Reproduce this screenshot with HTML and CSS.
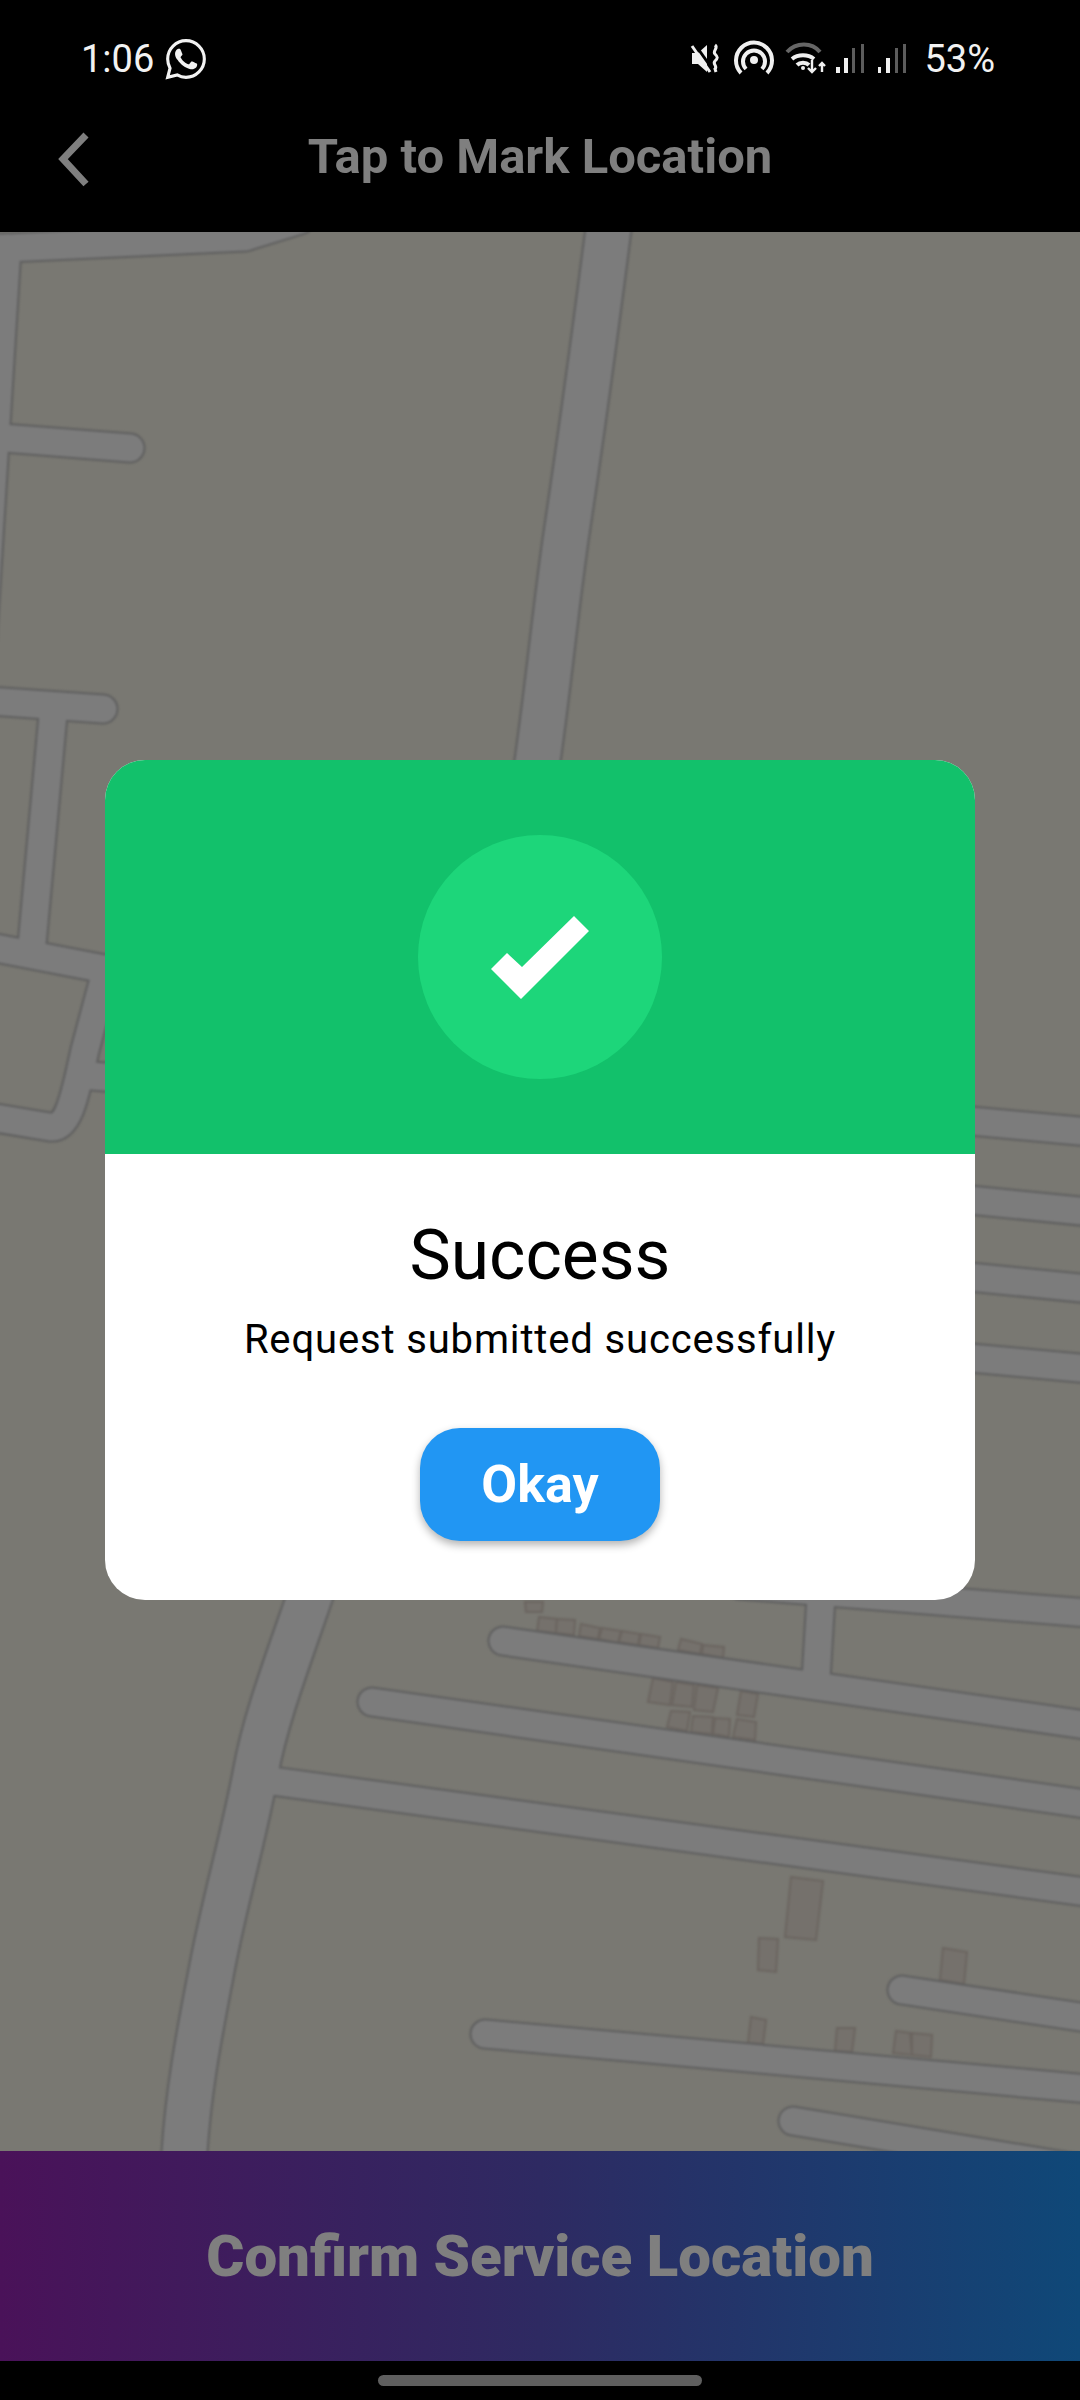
FILE: index.html
```html
<!DOCTYPE html>
<html lang="en">
<head>
    <meta charset="UTF-8">
    <meta name="viewport" content="width=device-width, initial-scale=1.0">
    <title>Tap to Mark Location</title>
    <link rel="stylesheet" href="styles.css">
</head>
<body>

<div class="screen">
    <div class="status-bar">
        <div class="status-left">
            <span class="status-text">1:06</span>
            <svg class="icon-whatsapp" viewBox="0 0 24 24">
                <path class="wa-ring" d="M12 2C6.5 2 2 6.5 2 12c0 1.8.5 3.5 1.3 5L2 22l5.2-1.3C8.6 21.5 10.3 22 12 22c5.5 0 10-4.5 10-10S17.5 2 12 2z"/>
                <path class="wa-phone" d="M17.472 14.382c-.297-.149-1.758-.867-2.03-.967-.273-.099-.471-.148-.67.15-.197.297-.767.966-.94 1.164-.173.199-.347.223-.644.075-.297-.15-1.255-.463-2.39-1.475-.883-.788-1.48-1.761-1.653-2.059-.173-.297-.018-.458.13-.606.134-.133.298-.347.446-.52.149-.174.198-.298.298-.497.099-.198.05-.371-.025-.52-.075-.149-.669-1.612-.916-2.207-.242-.579-.487-.5-.669-.51-.173-.008-.371-.01-.57-.01-.198 0-.52.074-.792.372-.272.297-1.04 1.016-1.04 2.479 0 1.462 1.065 2.875 1.213 3.074.149.198 2.096 3.2 5.077 4.487.709.306 1.262.489 1.694.625.712.227 1.36.195 1.871.118.571-.085 1.758-.719 2.006-1.413.248-.694.248-1.289.173-1.413-.074-.124-.272-.198-.57-.347z"/>
            </svg>
        </div>
        <div class="status-right">
            <!-- mute -->
            <svg class="status-icon" width="36" height="38" viewBox="690 40 36 38">
                <path class="solid" d="M693 53h6l9-8v27l-9-8h-6z"/>
                <path class="cut" d="M695 43l19 27"/>
                <path class="line-thin" d="M693 46l18 26"/>
                <path class="line-thin" d="M716 45c4 3-3 6 0 9s3 4 0 7 3 5 0 8l1 3"/>
            </svg>
            <!-- hotspot -->
            <svg class="status-icon" width="42" height="38" viewBox="734 40 42 38">
                <circle class="solid" cx="755" cy="60" r="4"/>
                <path class="line" d="M747 69a11 11 0 1 1 16 0"/>
                <path class="line" d="M742 73a18 18 0 1 1 26 0"/>
            </svg>
            <!-- wifi -->
            <svg class="status-icon" width="43" height="38" viewBox="784 40 43 38">
                <path class="line dim" d="M788 52c9-10 25-10 33 0"/>
                <path class="line" d="M793 59c6-5 16-5 22 0"/>
                <path class="line" d="M798 65c3-3 9-3 12 0"/>
                <circle class="solid" cx="804" cy="68" r="2"/>
                <path class="thin" d="M813 60v12m-4-4l4 4 4-4"/>
                <path class="thin" d="M823 72v-9m-3 3l3-3 3 3"/>
            </svg>
            <!-- signal -->
            <svg class="status-icon" width="33" height="38" viewBox="835 40 33 38">
                <rect class="solid" x="837" y="67" width="4" height="6"/>
                <rect class="solid" x="845" y="58" width="4" height="15"/>
                <rect class="bar-dim" x="853" y="48" width="3" height="25"/>
                <rect class="bar-dim" x="862" y="44" width="3" height="29"/>
            </svg>
            <svg class="status-icon" width="33" height="38" viewBox="876 40 33 38">
                <rect class="solid" x="879" y="67" width="3" height="6"/>
                <rect class="solid" x="887" y="58" width="4" height="15"/>
                <rect class="bar-dim" x="896" y="48" width="3" height="25"/>
                <rect class="bar-dim" x="904" y="44" width="3" height="29"/>
            </svg>
            <span class="status-text battery">53%</span>
        </div>
    </div>

    <div class="app-bar">
        <svg class="back-icon" width="40" height="60" viewBox="0 0 40 60">
            <path d="M31 6L8 30l23 25"/>
        </svg>
        <h1 class="app-title">Tap to Mark Location</h1>
    </div>

    <svg class="map" viewBox="0 232 1080 1919" width="1080" height="1919">
        <defs>
            <g id="roadsMain">
                <path d="M609 225C593 350 579 450 567 530S545 720 533 790"/>
                <path d="M312 1590C288 1660 265 1720 256 1771C243 1840 225 1900 213 1963C200 2030 188 2090 184 2160"/>
            </g>
            <g id="roadsSide">
                <path d="M-10 248L7 248L245 237L300 220"/>
                <path d="M7 248L-18 650"/>
                <path d="M-10 437L130 448"/>
                <path d="M-10 701L103 709"/>
                <path d="M53 715L32 945"/>
                <path d="M-10 947L110 970"/>
                <path d="M-10 1117L50 1127C70 1129 76 1090 85 1050L105 975"/>
                <path d="M80 1075L130 1079"/>
                <path d="M960 1120L1100 1133"/>
                <path d="M960 1199L1100 1213"/>
                <path d="M960 1276L1100 1290"/>
                <path d="M960 1357L1100 1370"/>
                <path d="M740 1585L1100 1614"/>
                <path d="M816 1680L822 1580"/>
                <path d="M503 1641L1100 1727"/>
                <path d="M372 1702L1100 1806"/>
                <path d="M250 1778L1100 1894"/>
                <path d="M902 1990L1100 2020"/>
                <path d="M485 2034L1100 2090"/>
                <path d="M793 2121L1100 2172"/>
            </g>
        </defs>

        <g class="map-art">
            <g class="buildings">
                <polygon points="525,1602 543,1602 542,1612 526,1612"/>
                <polygon points="539,1617 557,1619 556,1633 537,1631"/>
                <polygon points="557,1619 575,1620 574,1635 556,1633"/>
                <polygon points="581,1624 600,1628 598,1639 579,1636"/>
                <polygon points="602,1628 621,1631 618,1643 599,1639"/>
                <polygon points="622,1631 640,1634 638,1645 619,1642"/>
                <polygon points="641,1634 660,1637 658,1648 639,1645"/>
                <polygon points="681,1639 702,1644 700,1654 678,1650"/>
                <polygon points="703,1645 724,1647 723,1658 702,1654"/>
                <polygon points="653,1678 673,1682 670,1705 648,1702"/>
                <polygon points="676,1682 694,1685 692,1707 672,1705"/>
                <polygon points="697,1685 718,1688 713,1712 694,1710"/>
                <polygon points="741,1691 758,1694 754,1717 737,1715"/>
                <polygon points="671,1711 690,1712 687,1731 667,1727"/>
                <polygon points="693,1716 713,1717 712,1734 691,1732"/>
                <polygon points="715,1718 730,1719 729,1737 713,1734"/>
                <polygon points="737,1719 756,1722 755,1740 733,1737"/>
                <polygon points="791,1877 823,1881 816,1940 785,1937"/>
                <polygon points="759,1938 778,1939 776,1972 758,1970"/>
                <polygon points="943,1948 967,1952 964,1984 940,1980"/>
                <polygon points="751,2017 766,2020 763,2044 748,2043"/>
                <polygon points="837,2028 855,2028 852,2052 835,2051"/>
                <polygon points="896,2031 910,2033 912,2055 893,2053"/>
                <polygon points="912,2033 932,2035 931,2057 912,2055"/>
            </g>

            <use href="#roadsMain" class="road-edge road-main"/>
            <use href="#roadsSide" class="road-edge road-side"/>
            <use href="#roadsMain" class="road-fill road-main"/>
            <use href="#roadsSide" class="road-fill road-side"/>
        </g>
    </svg>

    <div class="confirm-bar">Confirm Service Location</div>
    <div class="nav-bar"><span class="home-pill"></span></div>

    <div class="dialog-layer">
        <div class="dialog">
            <div class="dialog-head">
                <div class="check-circle">
                    <svg width="98" height="83" viewBox="491 916 98 83">
                        <polygon points="574,916 589,931 521,999 491,969 507,953 522,967"/>
                    </svg>
                </div>
            </div>
            <div class="dialog-body">
                <h2 class="dialog-title">Success</h2>
                <p class="dialog-text">Request submitted successfully</p>
                <button class="okay-btn" type="button">Okay</button>
            </div>
        </div>
    </div>
</div>

</body>
</html>
```

FILE: styles.css
```css
* {
    box-sizing: border-box;
}

body {
    margin: 0;
    background-color: #000;
    font-family: Roboto, "Liberation Sans", sans-serif;
}

.screen {
    position: relative;
    display: flex;
    flex-direction: column;
    width: 1080px;
    height: 2400px;
    overflow: hidden;
}

/* status bar */
.status-bar {
    display: flex;
    justify-content: space-between;
    align-items: center;
    height: 78px;
    padding: 40px 85px 0 81px;
}

.status-left,
.status-right {
    display: flex;
    align-items: center;
}

.status-right {
    gap: 8px;
}

.status-text {
    color: #f2f2f2;
    font-size: 38px;
    line-height: 38px;
}

.battery {
    margin-left: 8px;
}

.icon-whatsapp {
    width: 44px;
    height: 44px;
    margin-left: 10px;
}

.wa-ring {
    fill: none;
    stroke: #f2f2f2;
    stroke-width: 1.7;
}

.wa-phone {
    fill: #f2f2f2;
}

.status-icon .solid {
    fill: #f0f0f0;
}

.status-icon .line {
    fill: none;
    stroke: #f0f0f0;
    stroke-width: 4;
}

.status-icon .line-thin {
    fill: none;
    stroke: #f0f0f0;
    stroke-width: 3;
}

.status-icon .thin {
    fill: none;
    stroke: #f0f0f0;
    stroke-width: 2.4;
}

.status-icon .cut {
    fill: none;
    stroke: #000;
    stroke-width: 3;
}

.status-icon .dim {
    stroke: #666;
}

.status-icon .bar-dim {
    fill: #5c5c5c;
}

/* app bar */
.app-bar {
    position: relative;
    display: flex;
    justify-content: center;
    align-items: center;
    height: 154px;
    padding-top: 4px;
}

.back-icon {
    position: absolute;
    left: 55px;
    top: 51px;
}

.back-icon path {
    fill: none;
    stroke: #7f7f7f;
    stroke-width: 7;
}

.app-title {
    margin: 0;
    color: #7f7f7f;
    font-size: 49px;
    font-weight: 700;
    line-height: 56px;
}

/* map */
.map {
    display: block;
    flex: none;
    background-color: #797872;
}

.map-art {
    filter: blur(0.8px);
}

.buildings polygon {
    fill: #75716c;
    stroke: #6b6560;
    stroke-width: 2;
}

.road-edge,
.road-fill {
    fill: none;
    stroke-linecap: round;
    stroke-linejoin: round;
}

.road-edge {
    stroke: #5f5f5f;
}

.road-fill {
    stroke: #7c7c7c;
}

.road-edge.road-main {
    stroke-width: 48px;
}

.road-fill.road-main {
    stroke-width: 44px;
}

.road-edge.road-side {
    stroke-width: 31px;
}

.road-fill.road-side {
    stroke-width: 27px;
}

/* bottom */
.confirm-bar {
    display: flex;
    justify-content: center;
    align-items: center;
    height: 210px;
    background: linear-gradient(to right, #4a1259, #2e2a62 50%, #0f4878);
    color: #7f7f7f;
    font-size: 58.2px;
    font-weight: 900;
}

.nav-bar {
    display: flex;
    justify-content: center;
    padding-top: 14px;
    height: 39px;
}

.home-pill {
    width: 324px;
    height: 11px;
    border-radius: 6px;
    background-color: #5f5f5f;
}

/* dialog */
.dialog-layer {
    position: absolute;
    inset: 0;
    display: flex;
    justify-content: center;
    align-items: flex-start;
    padding-top: 760px;
}

.dialog {
    width: 870px;
    height: 840px;
    border-radius: 40px;
    overflow: hidden;
    background: #fff;
}

.dialog-head {
    display: flex;
    justify-content: center;
    align-items: center;
    height: 394px;
    background-color: #12c16b;
}

.check-circle {
    display: flex;
    justify-content: center;
    align-items: center;
    width: 244px;
    height: 244px;
    border-radius: 50%;
    background-color: #1dd67a;
}

.check-circle polygon {
    fill: #fff;
}

.dialog-body {
    display: flex;
    flex-direction: column;
    align-items: center;
    padding-top: 63px;
    color: #000;
}

.dialog-title {
    margin: 0;
    font-size: 69.5px;
    font-weight: 400;
    line-height: 78px;
}

.dialog-text {
    margin: 21px 0 0;
    font-size: 40px;
    line-height: 48px;
    letter-spacing: 0.85px;
}

.okay-btn {
    width: 240px;
    height: 113px;
    margin-top: 64px;
    padding: 0;
    border: none;
    border-radius: 40px;
    background-color: #2196f3;
    box-shadow: 0 4px 8px rgba(0, 0, 0, 0.3);
    color: #fff;
    font-family: inherit;
    font-size: 52px;
    font-weight: 700;
}
```
